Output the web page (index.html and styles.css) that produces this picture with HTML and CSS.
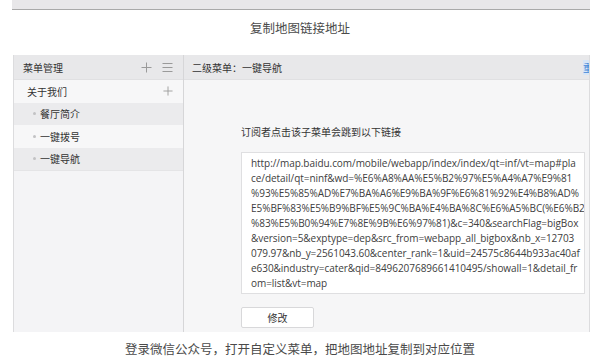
FILE: index.html
```html
<!DOCTYPE html>
<html lang="zh">
<head>
<meta charset="utf-8">
<link rel="stylesheet" href="styles.css">
</head>
<body>
<div class="topbar"></div>
<p class="caption caption-top">复制地图链接地址</p>
<div class="panel">
  <aside class="sidebar">
    <div class="side-head">
      <span class="head-title">菜单管理</span>
      <span class="head-icons">
        <svg class="ico" viewBox="0 0 11 11" width="11" height="11"><path d="M5.5 0.5v10M0.5 5.5h10" stroke="#9a9a9a" stroke-width="1" fill="none"/></svg>
        <svg class="ico" viewBox="0 0 11 11" width="11" height="11"><path d="M0.5 1.5h10M0.5 5.5h10M0.5 9.5h10" stroke="#9a9a9a" stroke-width="1" fill="none"/></svg>
      </span>
    </div>
    <div class="row row-top">
      <span>关于我们</span>
      <svg class="ico ico-row" viewBox="0 0 11 11" width="10" height="10"><path d="M5.5 0.5v10M0.5 5.5h10" stroke="#9a9a9a" stroke-width="1" fill="none"/></svg>
    </div>
    <div class="row row-sub alt"><i class="dot"></i><span>餐厅简介</span></div>
    <div class="row row-sub"><i class="dot"></i><span>一键拨号</span></div>
    <div class="row row-sub alt"><i class="dot"></i><span>一键导航</span></div>
    <div class="side-rest"></div>
  </aside>
  <main class="main">
    <div class="main-head">
      <span>二级菜单：一键导航</span>
      <span class="head-link">重</span>
    </div>
    <div class="main-body">
      <p class="hint">订阅者点击该子菜单会跳到以下链接</p>
      <div class="urlbox">
        <div class="ln">http://map.baidu.com/mobile/webapp/index/index/qt=inf/vt=map#pla</div>
        <div class="ln">ce/detail/qt=ninf&amp;wd=%E6%A8%AA%E5%B2%97%E5%A4%A7%E9%81</div>
        <div class="ln">%93%E5%85%AD%E7%BA%A6%E9%BA%9F%E6%81%92%E4%B8%AD%</div>
        <div class="ln">E5%BF%83%E5%B9%BF%E5%9C%BA%E4%BA%8C%E6%A5%BC(%E6%B2</div>
        <div class="ln">%83%E5%B0%94%E7%8E%9B%E6%97%81)&amp;c=340&amp;searchFlag=bigBox</div>
        <div class="ln">&amp;version=5&amp;exptype=dep&amp;src_from=webapp_all_bigbox&amp;nb_x=12703</div>
        <div class="ln">079.97&amp;nb_y=2561043.60&amp;center_rank=1&amp;uid=24575c8644b933ac40af</div>
        <div class="ln">e630&amp;industry=cater&amp;qid=8496207689661410495/showall=1&amp;detail_fr</div>
        <div class="ln">om=list&amp;vt=map</div>
      </div>
      <button class="btn">修改</button>
    </div>
  </main>
</div>
<p class="caption caption-bottom">登录微信公众号，打开自定义菜单，把地图地址复制到对应位置</p>
</body>
</html>
```
FILE: styles.css
```css
* { box-sizing: border-box; }
html, body { margin: 0; padding: 0; background: #fff; }
body {
  width: 600px;
  height: 359px;
  overflow: hidden;
  font-family: "Noto Sans CJK SC", "Open Sans", sans-serif;
  color: #333;
}
.topbar {
  margin-left: 12px;
  width: 578px;
  height: 10px;
  background: #e8e7e9;
  border-bottom: 1px solid #a9a9a9;
}
.caption {
  margin: 0;
  text-align: center;
  font-size: 12.5px;
  line-height: 16px;
  color: #4a4a4a;
}
.caption-top { padding-top: 10px; height: 45px; }
.caption-bottom { padding-top: 9px; }
.panel {
  margin-left: 13px;
  width: 577px;
  height: 277px;
  display: flex;
}
.sidebar {
  width: 171px;
  display: flex;
  flex-direction: column;
  border-left: 1px solid #dcdcde;
  border-right: 1px solid #d6d6d8;
  background: #f4f4f6;
}
.side-head {
  height: 25px;
  background: #e8e8ea;
  display: flex;
  align-items: center;
  justify-content: space-between;
  padding: 0 10px 0 9px;
  font-size: 10px;
  border-bottom: 1px solid #e0e0e2;
}
.head-icons { display: flex; gap: 10px; align-items: center; }
.ico { display: block; }
.row {
  height: 22.5px;
  display: flex;
  align-items: center;
  font-size: 10px;
  background: #f7f7f8;
}
.row-top {
  justify-content: space-between;
  padding: 0 10px 0 13px;
}
.row-sub { padding-left: 19px; }
.row.alt { background: #ebebed; }
.dot {
  width: 3px;
  height: 3px;
  border-radius: 50%;
  background: #c2c2c4;
  margin-right: 4px;
}
.side-rest {
  flex: 1;
  border-top: 1px solid #e4e4e6;
  background: #f4f4f6;
}
.main {
  flex: 1;
  display: flex;
  flex-direction: column;
  background: #f6f6f7;
  border-right: 1px solid #dcdcde;
  overflow: hidden;
}
.main-head {
  height: 25px;
  background: #e8e8ea;
  display: flex;
  align-items: center;
  justify-content: space-between;
  padding-left: 8px;
  font-size: 10px;
  border-bottom: 1px solid #e0e0e2;
}
.head-link {
  color: #3f86d8;
  background: #d7e6f7;
  margin-right: -4px;
  font-size: 10px;
}
.main-body {
  padding-left: 57px;
  padding-top: 46px;
}
.hint {
  margin: 0;
  font-size: 10px;
  line-height: 12px;
  height: 26px;
}
.urlbox {
  width: 344px;
  background: #fff;
  border: 1px solid #dfdfe1;
  padding: 3px 0 2px 9px;
  font-family: "Open Sans", "Noto Sans", sans-serif;
  font-size: 10px;
  letter-spacing: -0.05px;
  line-height: 15px;
  color: #404040;
  overflow: hidden;
}
.ln { white-space: nowrap; }
.btn {
  display: block;
  margin-top: 13px;
  width: 73px;
  height: 21px;
  padding: 0;
  background: #fff;
  border: 1px solid #d8d8da;
  border-radius: 2px;
  font-family: "Noto Sans CJK SC", sans-serif;
  font-size: 10px;
  color: #333;
}
```
